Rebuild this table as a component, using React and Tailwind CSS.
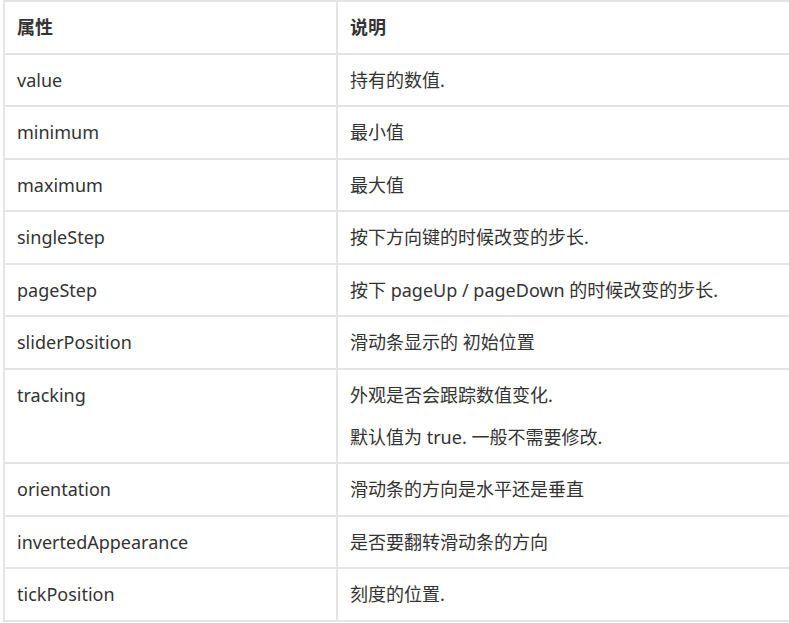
import React from 'react';

const rows = [
  { name: 'value', desc: ['持有的数值.'] },
  { name: 'minimum', desc: ['最小值'] },
  { name: 'maximum', desc: ['最大值'] },
  { name: 'singleStep', desc: ['按下方向键的时候改变的步长.'] },
  { name: 'pageStep', desc: ['按下 pageUp / pageDown 的时候改变的步长.'] },
  { name: 'sliderPosition', desc: ['滑动条显示的 初始位置'] },
  { name: 'tracking', desc: ['外观是否会跟踪数值变化.', '默认值为 true. 一般不需要修改.'] },
  { name: 'orientation', desc: ['滑动条的方向是水平还是垂直'] },
  { name: 'invertedAppearance', desc: ['是否要翻转滑动条的方向'] },
  { name: 'tickPosition', desc: ['刻度的位置.'] },
];

const App = () => {
  return (
    <div
      className="w-[789px] h-[623px] overflow-hidden bg-white text-[#333] pl-[3px]"
      style={{ fontFamily: '"Noto Sans", "Noto Sans CJK SC", sans-serif' }}
    >
      <table className="border-collapse w-[800px] text-[18px] leading-[26px]">
        <thead>
          <tr>
            <th className="w-[333px] border-2 border-[#e4e4e4] border-r-0 px-3 py-[12.25px] text-left font-bold">
              属性
            </th>
            <th className="border-2 border-[#e4e4e4] px-3 py-[12.25px] text-left font-bold">
              说明
            </th>
          </tr>
        </thead>
        <tbody>
          {rows.map((row, rowIndex) => (
            <tr key={rowIndex}>
              <td className="align-top border-2 border-[#e4e4e4] px-3 py-[12.25px]">{row.name}</td>
              <td className="align-top border-2 border-[#e4e4e4] px-3 py-[12.25px]">
                {row.desc.map((line, i) => (
                  <p key={i} className={i > 0 ? 'mt-4' : ''}>
                    {line}
                  </p>
                ))}
              </td>
            </tr>
          ))}
        </tbody>
      </table>
    </div>
  );
};

export default App;
